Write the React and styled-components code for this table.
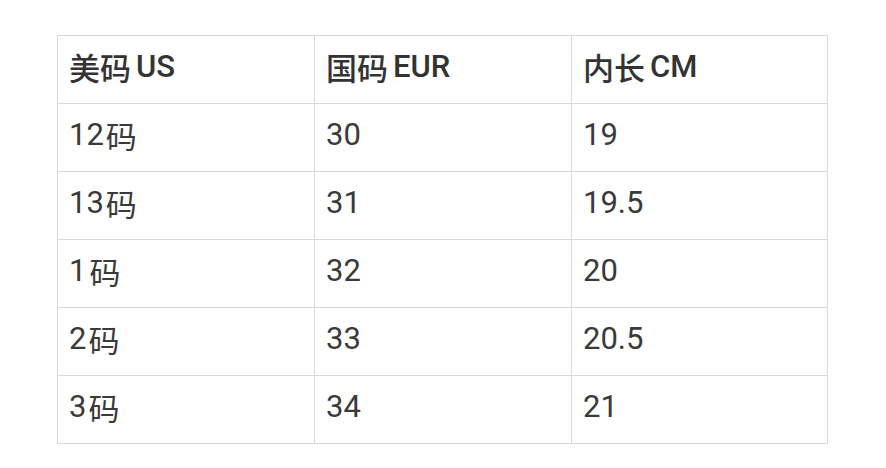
import React from "react";
import styled, { createGlobalStyle } from "styled-components";

const GlobalStyle = createGlobalStyle`
  html, body {
    margin: 0;
    padding: 0;
    background: #ffffff;
  }
  body {
    font-family: Roboto, "Noto Sans CJK SC", sans-serif;
  }
`;

const Page = styled.div`
  width: 886px;
  height: 468px;
  box-sizing: border-box;
  padding: 35px 0 0 57px;
`;

const Grid = styled.div`
  display: grid;
  grid-template-columns: 257px 257px 256px;
  grid-auto-rows: 68px;
  width: max-content;
  border-top: 1px solid #d9d9d9;
  border-left: 1px solid #d9d9d9;
`;

const Cell = styled.div`
  display: flex;
  align-items: center;
  box-sizing: border-box;
  border-right: 1px solid #d9d9d9;
  border-bottom: 1px solid #d9d9d9;
  padding: 0 0 7px 11px;
  font-family: Roboto, "Noto Sans CJK SC", sans-serif;
  font-size: 31px;
  font-weight: ${(p) => (p.$head ? 500 : 400)};
  color: ${(p) => (p.$head ? "#333333" : "#3a3a3a")};
  white-space: nowrap;
`;

const Gap = styled.span`
  display: inline-block;
  width: ${(p) => p.$w}px;
`;

const headers = [
  ["美码", "US"],
  ["国码", "EUR"],
  ["内长", "CM"],
];

const rows = [
  [["12", "码"], "30", "19"],
  [["13", "码"], "31", "19.5"],
  [["1", "码"], "32", "20"],
  [["2", "码"], "33", "20.5"],
  [["3", "码"], "34", "21"],
];

export default function App() {
  return (
    <Page>
      <GlobalStyle />
      <Grid>
        {headers.map(([zh, en]) => (
          <Cell $head key={en}>
            {zh}
            <Gap $w={5} />
            {en}
          </Cell>
        ))}
        {rows.map(([size, eur, cm]) => (
          <React.Fragment key={eur}>
            <Cell>
              {size[0]}
              <Gap $w={size[0] === "1" ? 3 : 2} />
              {size[1]}
            </Cell>
            <Cell>{eur}</Cell>
            <Cell>{cm}</Cell>
          </React.Fragment>
        ))}
      </Grid>
    </Page>
  );
}
